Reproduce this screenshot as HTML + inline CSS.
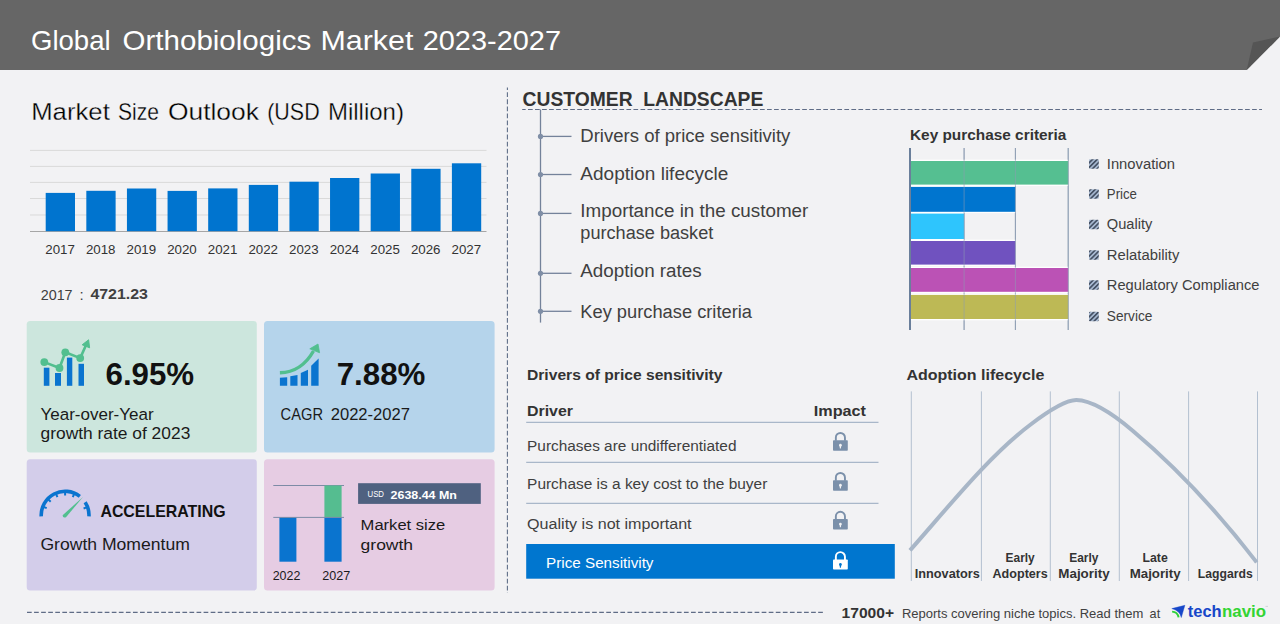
<!DOCTYPE html>
<html><head><meta charset="utf-8"><style>
html,body{margin:0;padding:0;background:#f2f2f4;width:1280px;height:624px;overflow:hidden}
svg{display:block;font-family:"Liberation Sans", sans-serif}
</style></head><body>
<svg width="1280" height="624" viewBox="0 0 1280 624">
<rect width="1280" height="624" fill="#f2f2f4"/>
<rect x="0.00" y="0.00" width="1280.00" height="70.00" fill="#666666" />
<path d="M1246.7,70 L1280,36.6 L1280,70 Z" fill="#f2f2f4" stroke="none" stroke-width="1" />
<path d="M1246.7,70 L1253,42.5 L1280,36.6 Z" fill="#555555" stroke="none" stroke-width="1" />
<text x="31.00" y="49.80" font-size="27.65" font-weight="normal" fill="#ffffff" textLength="79.60" lengthAdjust="spacingAndGlyphs" >Global</text>
<text x="122.60" y="49.80" font-size="27.65" font-weight="normal" fill="#ffffff" textLength="188.60" lengthAdjust="spacingAndGlyphs" >Orthobiologics</text>
<text x="320.50" y="49.80" font-size="27.65" font-weight="normal" fill="#ffffff" textLength="92.90" lengthAdjust="spacingAndGlyphs" >Market</text>
<text x="422.70" y="49.80" font-size="27.65" font-weight="normal" fill="#ffffff" textLength="138.30" lengthAdjust="spacingAndGlyphs" >2023-2027</text>
<text x="31.20" y="119.80" font-size="23.32" font-weight="normal" fill="#000000" textLength="78.60" lengthAdjust="spacingAndGlyphs" stroke="#f2f2f4" stroke-width="0.3">Market</text>
<text x="118.00" y="119.80" font-size="23.32" font-weight="normal" fill="#000000" textLength="41.00" lengthAdjust="spacingAndGlyphs" stroke="#f2f2f4" stroke-width="0.3">Size</text>
<text x="167.90" y="119.80" font-size="23.32" font-weight="normal" fill="#000000" textLength="91.10" lengthAdjust="spacingAndGlyphs" stroke="#f2f2f4" stroke-width="0.3">Outlook</text>
<text x="267.20" y="119.80" font-size="23.32" font-weight="normal" fill="#000000" textLength="52.50" lengthAdjust="spacingAndGlyphs" stroke="#f2f2f4" stroke-width="0.3">(USD</text>
<text x="327.90" y="119.80" font-size="23.32" font-weight="normal" fill="#000000" textLength="76.10" lengthAdjust="spacingAndGlyphs" stroke="#f2f2f4" stroke-width="0.3">Million)</text>
<line x1="30.00" y1="150.40" x2="486.50" y2="150.40" stroke="#d9d9d9" stroke-width="1" />
<line x1="30.00" y1="166.40" x2="486.50" y2="166.40" stroke="#d9d9d9" stroke-width="1" />
<line x1="30.00" y1="182.40" x2="486.50" y2="182.40" stroke="#d9d9d9" stroke-width="1" />
<line x1="30.00" y1="198.50" x2="486.50" y2="198.50" stroke="#d9d9d9" stroke-width="1" />
<line x1="30.00" y1="215.00" x2="486.50" y2="215.00" stroke="#d9d9d9" stroke-width="1" />
<line x1="30.00" y1="231.50" x2="486.50" y2="231.50" stroke="#a6a6a6" stroke-width="1" />
<rect x="45.70" y="192.90" width="29.30" height="38.30" fill="#0074cf" />
<text x="45.30" y="253.75" font-size="13.69" font-weight="normal" fill="#333333" textLength="29.60" lengthAdjust="spacingAndGlyphs" >2017</text>
<rect x="86.32" y="190.80" width="29.30" height="40.40" fill="#0074cf" />
<text x="85.92" y="253.75" font-size="13.69" font-weight="normal" fill="#333333" textLength="29.60" lengthAdjust="spacingAndGlyphs" >2018</text>
<rect x="126.94" y="188.50" width="29.30" height="42.70" fill="#0074cf" />
<text x="126.54" y="253.75" font-size="13.69" font-weight="normal" fill="#333333" textLength="29.60" lengthAdjust="spacingAndGlyphs" >2019</text>
<rect x="167.56" y="190.90" width="29.30" height="40.30" fill="#0074cf" />
<text x="167.16" y="253.75" font-size="13.69" font-weight="normal" fill="#333333" textLength="29.60" lengthAdjust="spacingAndGlyphs" >2020</text>
<rect x="208.18" y="188.40" width="29.30" height="42.80" fill="#0074cf" />
<text x="207.78" y="253.75" font-size="13.69" font-weight="normal" fill="#333333" textLength="29.60" lengthAdjust="spacingAndGlyphs" >2021</text>
<rect x="248.80" y="184.90" width="29.30" height="46.30" fill="#0074cf" />
<text x="248.40" y="253.75" font-size="13.69" font-weight="normal" fill="#333333" textLength="29.60" lengthAdjust="spacingAndGlyphs" >2022</text>
<rect x="289.42" y="181.70" width="29.30" height="49.50" fill="#0074cf" />
<text x="289.02" y="253.75" font-size="13.69" font-weight="normal" fill="#333333" textLength="29.60" lengthAdjust="spacingAndGlyphs" >2023</text>
<rect x="330.04" y="178.00" width="29.30" height="53.20" fill="#0074cf" />
<text x="329.64" y="253.75" font-size="13.69" font-weight="normal" fill="#333333" textLength="29.60" lengthAdjust="spacingAndGlyphs" >2024</text>
<rect x="370.66" y="173.50" width="29.30" height="57.70" fill="#0074cf" />
<text x="370.26" y="253.75" font-size="13.69" font-weight="normal" fill="#333333" textLength="29.60" lengthAdjust="spacingAndGlyphs" >2025</text>
<rect x="411.28" y="168.80" width="29.30" height="62.40" fill="#0074cf" />
<text x="410.88" y="253.75" font-size="13.69" font-weight="normal" fill="#333333" textLength="29.60" lengthAdjust="spacingAndGlyphs" >2026</text>
<rect x="451.90" y="163.30" width="29.30" height="67.90" fill="#0074cf" />
<text x="451.50" y="253.75" font-size="13.69" font-weight="normal" fill="#333333" textLength="29.60" lengthAdjust="spacingAndGlyphs" >2027</text>
<text x="40.70" y="299.80" font-size="15.08" font-weight="normal" fill="#404040" textLength="31.90" lengthAdjust="spacingAndGlyphs" >2017</text>
<text x="79.4" y="299.8" font-size="15" fill="#404040">:</text>
<text x="90.40" y="298.90" font-size="14.66" font-weight="bold" fill="#404040" textLength="57.60" lengthAdjust="spacingAndGlyphs" >4721.23</text>
<rect x="26.70" y="321.00" width="230.10" height="131.40" fill="#cce6dd" rx="3.5" ry="3.5"/>
<rect x="264.00" y="321.00" width="230.60" height="131.40" fill="#b5d4eb" rx="3.5" ry="3.5"/>
<rect x="26.70" y="459.20" width="230.10" height="131.40" fill="#d3cdea" rx="3.5" ry="3.5"/>
<rect x="264.00" y="459.20" width="230.60" height="131.40" fill="#e6cce3" rx="3.5" ry="3.5"/>
<rect x="43.80" y="367.70" width="5.60" height="18.10" fill="#0a74cf" />
<rect x="55.00" y="373.00" width="6.00" height="12.80" fill="#0a74cf" />
<rect x="66.90" y="357.60" width="5.40" height="28.20" fill="#0a74cf" />
<rect x="78.50" y="363.80" width="5.50" height="22.00" fill="#0a74cf" />
<path d="M44.3,362.1 L59.5,368 L65.3,352.3 L80.2,358.1 L86.5,344" fill="none" stroke="#52bf8f" stroke-width="2.6" stroke-linejoin="round"/>
<circle cx="44.3" cy="362.1" r="3.9" fill="#52bf8f"/>
<circle cx="59.5" cy="368" r="3.9" fill="#52bf8f"/>
<circle cx="65.3" cy="352.3" r="3.9" fill="#52bf8f"/>
<circle cx="80.2" cy="358.1" r="3.9" fill="#52bf8f"/>
<path d="M88.6,339.8 L82.2,344.8 L89.6,347.8 Z" fill="#52bf8f" stroke="#52bf8f" stroke-width="1" stroke-linejoin="round"/>
<text x="105.50" y="384.70" font-size="31.70" font-weight="bold" fill="#111111" textLength="88.60" lengthAdjust="spacingAndGlyphs" >6.95%</text>
<text x="40.50" y="419.60" font-size="15.92" font-weight="normal" fill="#1a1a1a" textLength="113.10" lengthAdjust="spacingAndGlyphs" >Year-over-Year</text>
<text x="40.50" y="439.30" font-size="15.92" font-weight="normal" fill="#1a1a1a" textLength="149.80" lengthAdjust="spacingAndGlyphs" >growth rate of 2023</text>
<path d="M279.9,385.8 L279.9,377.8 L287.2,377.3 L287.2,385.8 Z" fill="#0a74cf" stroke="none" stroke-width="1" />
<path d="M290.3,385.8 L290.3,376.3 L297.5,374.9 L297.5,385.8 Z" fill="#0a74cf" stroke="none" stroke-width="1" />
<path d="M300.8,385.8 L300.8,373 L308,369.8 L308,385.8 Z" fill="#0a74cf" stroke="none" stroke-width="1" />
<path d="M311.2,385.8 L311.2,365.8 L318.6,358.6 L318.6,385.8 Z" fill="#0a74cf" stroke="none" stroke-width="1" />
<path d="M279.9,372.8 C293,372.5 305,366 313.5,351" fill="none" stroke="#52bf8f" stroke-width="3.4" />
<path d="M318,344 L309.8,348.8 L319.6,352.8 Z" fill="#52bf8f" stroke="#52bf8f" stroke-width="0.8" stroke-linejoin="round"/>
<text x="336.70" y="384.70" font-size="31.70" font-weight="bold" fill="#111111" textLength="88.70" lengthAdjust="spacingAndGlyphs" >7.88%</text>
<text x="280.60" y="419.80" font-size="16.06" font-weight="normal" fill="#1a1a1a" textLength="42.40" lengthAdjust="spacingAndGlyphs" >CAGR</text>
<text x="330.70" y="419.80" font-size="16.06" font-weight="normal" fill="#1a1a1a" textLength="79.30" lengthAdjust="spacingAndGlyphs" >2022-2027</text>
<path d="M41.23,516.45 A23.9,23.9 0 0 1 79.81,496.37" fill="none" stroke="#0a74cf" stroke-width="3.6" />
<path d="M85.14,502.18 A23.9,23.9 0 0 1 88.97,516.45" fill="none" stroke="#0a74cf" stroke-width="3.6" />
<line x1="43.72" y1="506.99" x2="46.71" y2="508.14" stroke="#0a74cf" stroke-width="2" />
<line x1="48.35" y1="499.58" x2="50.69" y2="501.76" stroke="#0a74cf" stroke-width="2" />
<line x1="56.15" y1="494.12" x2="57.40" y2="497.07" stroke="#0a74cf" stroke-width="2" />
<line x1="65.10" y1="492.30" x2="65.10" y2="495.50" stroke="#0a74cf" stroke-width="2" />
<line x1="74.05" y1="494.12" x2="72.80" y2="497.07" stroke="#0a74cf" stroke-width="2" />
<line x1="86.62" y1="507.37" x2="83.61" y2="508.46" stroke="#0a74cf" stroke-width="2" />
<path d="M62.6,515.2 Q62.8,518.6 66,517.2 L83,497 Z" fill="#52bf8f" stroke="none" stroke-width="1" />
<text x="100.40" y="516.60" font-size="16.06" font-weight="bold" fill="#111111" textLength="125.20" lengthAdjust="spacingAndGlyphs" >ACCELERATING</text>
<text x="40.40" y="549.70" font-size="16.06" font-weight="normal" fill="#1a1a1a" textLength="149.50" lengthAdjust="spacingAndGlyphs" >Growth Momentum</text>
<line x1="273.30" y1="485.50" x2="344.00" y2="485.50" stroke="#7d8ba6" stroke-width="1" />
<rect x="279.40" y="517.40" width="17.00" height="44.30" fill="#0a74cf" />
<rect x="324.40" y="485.50" width="17.20" height="32.00" fill="#55bd90" />
<rect x="324.40" y="517.40" width="17.20" height="44.30" fill="#0a74cf" />
<line x1="273.30" y1="517.40" x2="344.00" y2="517.40" stroke="#7d8ba6" stroke-width="1" />
<text x="272.70" y="579.80" font-size="13.13" font-weight="normal" fill="#1a1a1a" textLength="27.70" lengthAdjust="spacingAndGlyphs" >2022</text>
<text x="322.20" y="579.80" font-size="13.13" font-weight="normal" fill="#1a1a1a" textLength="28.00" lengthAdjust="spacingAndGlyphs" >2027</text>
<rect x="358.10" y="483.20" width="122.70" height="20.70" fill="#4f6180" />
<text x="367.50" y="497.00" font-size="9.50" font-weight="normal" fill="#ffffff" textLength="16.50" lengthAdjust="spacingAndGlyphs" >USD</text>
<text x="390.60" y="499.00" font-size="11.17" font-weight="bold" fill="#ffffff" textLength="66.30" lengthAdjust="spacingAndGlyphs" >2638.44 Mn</text>
<text x="360.60" y="529.90" font-size="15.36" font-weight="normal" fill="#1a1a1a" textLength="84.70" lengthAdjust="spacingAndGlyphs" >Market size</text>
<text x="360.60" y="549.90" font-size="15.36" font-weight="normal" fill="#1a1a1a" textLength="52.50" lengthAdjust="spacingAndGlyphs" >growth</text>
<line x1="507.40" y1="87.40" x2="507.40" y2="593.00" stroke="#5f6e88" stroke-width="1.1" stroke-dasharray="4.8 2.25" stroke-dashoffset="2.15"/>
<line x1="27.00" y1="612.40" x2="823.00" y2="612.40" stroke="#5f6c86" stroke-width="1.1" stroke-dasharray="4.7 2.364"/>
<text x="522.60" y="105.60" font-size="19.97" font-weight="bold" fill="#333333" textLength="240.70" lengthAdjust="spacingAndGlyphs" >CUSTOMER&#160;&#160;LANDSCAPE</text>
<line x1="522.20" y1="109.50" x2="1262.00" y2="109.50" stroke="#5f6c86" stroke-width="1.1" stroke-dasharray="4.7 2.33" stroke-dashoffset="1.23"/>
<line x1="540.50" y1="109.50" x2="540.50" y2="322.60" stroke="#74829a" stroke-width="1.3" />
<line x1="540.50" y1="136.40" x2="571.50" y2="136.40" stroke="#74829a" stroke-width="1.3" />
<circle cx="540.5" cy="136.4" r="2.6" fill="#7f8ea6"/>
<line x1="540.50" y1="174.50" x2="571.50" y2="174.50" stroke="#74829a" stroke-width="1.3" />
<circle cx="540.5" cy="174.5" r="2.6" fill="#7f8ea6"/>
<line x1="540.50" y1="213.40" x2="571.50" y2="213.40" stroke="#74829a" stroke-width="1.3" />
<circle cx="540.5" cy="213.4" r="2.6" fill="#7f8ea6"/>
<line x1="540.50" y1="273.30" x2="571.50" y2="273.30" stroke="#74829a" stroke-width="1.3" />
<circle cx="540.5" cy="273.3" r="2.6" fill="#7f8ea6"/>
<line x1="540.50" y1="311.30" x2="571.50" y2="311.30" stroke="#74829a" stroke-width="1.3" />
<circle cx="540.5" cy="311.3" r="2.6" fill="#7f8ea6"/>
<text x="580.30" y="141.80" font-size="17.60" font-weight="normal" fill="#404040" textLength="210.10" lengthAdjust="spacingAndGlyphs" >Drivers of price sensitivity</text>
<text x="580.30" y="179.70" font-size="17.60" font-weight="normal" fill="#404040" textLength="148.00" lengthAdjust="spacingAndGlyphs" >Adoption lifecycle</text>
<text x="580.30" y="217.30" font-size="17.60" font-weight="normal" fill="#404040" textLength="228.00" lengthAdjust="spacingAndGlyphs" >Importance in the customer</text>
<text x="580.30" y="239.30" font-size="17.60" font-weight="normal" fill="#404040" textLength="133.00" lengthAdjust="spacingAndGlyphs" >purchase basket</text>
<text x="580.30" y="276.70" font-size="17.60" font-weight="normal" fill="#404040" textLength="121.40" lengthAdjust="spacingAndGlyphs" >Adoption rates</text>
<text x="580.30" y="318.20" font-size="17.60" font-weight="normal" fill="#404040" textLength="171.70" lengthAdjust="spacingAndGlyphs" >Key purchase criteria</text>
<text x="910.00" y="139.70" font-size="14.53" font-weight="bold" fill="#333333" textLength="156.40" lengthAdjust="spacingAndGlyphs" >Key purchase criteria</text>
<line x1="964.10" y1="148.00" x2="964.10" y2="330.00" stroke="#8d9db3" stroke-width="1" />
<line x1="1015.40" y1="148.00" x2="1015.40" y2="330.00" stroke="#8d9db3" stroke-width="1" />
<line x1="1068.20" y1="148.00" x2="1068.20" y2="330.00" stroke="#8d9db3" stroke-width="1" />
<rect x="910.50" y="159.70" width="157.70" height="26.20" fill="#ffffff" />
<rect x="910.50" y="185.60" width="104.90" height="27.50" fill="#ffffff" />
<rect x="910.50" y="212.30" width="53.60" height="28.00" fill="#ffffff" />
<rect x="910.50" y="239.70" width="104.90" height="26.20" fill="#ffffff" />
<rect x="910.50" y="266.70" width="157.70" height="26.40" fill="#ffffff" />
<rect x="910.50" y="293.60" width="157.70" height="26.70" fill="#ffffff" />
<rect x="910.50" y="161.00" width="157.70" height="23.60" fill="#55bf91" />
<rect x="910.50" y="186.90" width="104.90" height="24.90" fill="#0075cf" />
<rect x="910.50" y="213.60" width="53.60" height="25.40" fill="#2ec5fd" />
<rect x="910.50" y="241.00" width="104.90" height="23.60" fill="#7052bf" />
<rect x="910.50" y="268.00" width="157.70" height="23.80" fill="#bb52b5" />
<rect x="910.50" y="294.90" width="157.70" height="24.10" fill="#bdb955" />
<line x1="964.10" y1="148.00" x2="964.10" y2="330.00" stroke="#8d9db3" stroke-width="1" opacity="0.55"/>
<line x1="1015.40" y1="148.00" x2="1015.40" y2="330.00" stroke="#8d9db3" stroke-width="1" opacity="0.55"/>
<line x1="1068.20" y1="148.00" x2="1068.20" y2="330.00" stroke="#8d9db3" stroke-width="1" opacity="0.55"/>
<line x1="910.00" y1="148.00" x2="910.00" y2="330.00" stroke="#6a7f9b" stroke-width="2" />
<defs><pattern id="hatch" patternUnits="userSpaceOnUse" width="3.3" height="3.3" patternTransform="rotate(45)"><rect width="3.3" height="3.3" fill="#a9bbd3"/><rect width="1.7" height="3.3" fill="#465265"/></pattern></defs>
<rect x="1089.00" y="159.15" width="9.80" height="9.60" fill="url(#hatch)" rx="1"/>
<text x="1106.80" y="168.75" font-size="14.66" font-weight="normal" fill="#404040" textLength="68.20" lengthAdjust="spacingAndGlyphs" >Innovation</text>
<rect x="1089.00" y="189.20" width="9.80" height="9.60" fill="url(#hatch)" rx="1"/>
<text x="1106.80" y="198.80" font-size="14.66" font-weight="normal" fill="#404040" textLength="30.20" lengthAdjust="spacingAndGlyphs" >Price</text>
<rect x="1089.00" y="219.70" width="9.80" height="9.60" fill="url(#hatch)" rx="1"/>
<text x="1106.80" y="229.30" font-size="14.66" font-weight="normal" fill="#404040" textLength="45.60" lengthAdjust="spacingAndGlyphs" >Quality</text>
<rect x="1089.00" y="250.20" width="9.80" height="9.60" fill="url(#hatch)" rx="1"/>
<text x="1106.80" y="259.80" font-size="14.66" font-weight="normal" fill="#404040" textLength="72.60" lengthAdjust="spacingAndGlyphs" >Relatability</text>
<rect x="1089.00" y="280.20" width="9.80" height="9.60" fill="url(#hatch)" rx="1"/>
<text x="1106.80" y="289.80" font-size="14.66" font-weight="normal" fill="#404040" textLength="152.70" lengthAdjust="spacingAndGlyphs" >Regulatory Compliance</text>
<rect x="1089.00" y="311.70" width="9.80" height="9.60" fill="url(#hatch)" rx="1"/>
<text x="1106.80" y="321.30" font-size="14.66" font-weight="normal" fill="#404040" textLength="45.60" lengthAdjust="spacingAndGlyphs" >Service</text>
<text x="527.00" y="379.60" font-size="14.53" font-weight="bold" fill="#333333" textLength="195.40" lengthAdjust="spacingAndGlyphs" >Drivers of price sensitivity</text>
<text x="527.00" y="415.80" font-size="14.94" font-weight="bold" fill="#333333" textLength="46.00" lengthAdjust="spacingAndGlyphs" >Driver</text>
<text x="813.80" y="415.80" font-size="14.94" font-weight="bold" fill="#333333" textLength="52.20" lengthAdjust="spacingAndGlyphs" >Impact</text>
<line x1="526.20" y1="422.30" x2="878.50" y2="422.30" stroke="#a9b7c9" stroke-width="1.2" />
<line x1="526.20" y1="462.30" x2="878.50" y2="462.30" stroke="#a9b7c9" stroke-width="1.2" />
<line x1="526.20" y1="503.30" x2="878.50" y2="503.30" stroke="#a9b7c9" stroke-width="1.2" />
<text x="527.10" y="451.00" font-size="15.50" font-weight="normal" fill="#404040" textLength="209.40" lengthAdjust="spacingAndGlyphs" >Purchases are undifferentiated</text>
<text x="527.10" y="489.00" font-size="15.50" font-weight="normal" fill="#404040" textLength="240.20" lengthAdjust="spacingAndGlyphs" >Purchase is a key cost to the buyer</text>
<text x="527.10" y="529.10" font-size="15.50" font-weight="normal" fill="#404040" textLength="164.50" lengthAdjust="spacingAndGlyphs" >Quality is not important</text>
<rect x="526.20" y="544.00" width="368.60" height="34.70" fill="#0076cf" />
<text x="546.10" y="567.90" font-size="14.94" font-weight="normal" fill="#ffffff" textLength="107.40" lengthAdjust="spacingAndGlyphs" >Price Sensitivity</text>
<path d="M835.85,440.80 L835.85,437.50 A4.55,4.55 0 0 1 844.95,437.50 L844.95,440.80" fill="none" stroke="#7b90aa" stroke-width="1.9" />
<rect x="833.00" y="440.30" width="14.80" height="10.40" fill="#7b90aa" rx="0.8"/>
<circle cx="840.40" cy="445.20" r="1.35" fill="#f2f2f4"/>
<path d="M839.50,445.30 L841.30,445.30 L840.90,448.50 L839.90,448.50 Z" fill="#f2f2f4" stroke="none" stroke-width="1" />
<path d="M835.85,480.80 L835.85,477.50 A4.55,4.55 0 0 1 844.95,477.50 L844.95,480.80" fill="none" stroke="#7b90aa" stroke-width="1.9" />
<rect x="833.00" y="480.30" width="14.80" height="10.40" fill="#7b90aa" rx="0.8"/>
<circle cx="840.40" cy="485.20" r="1.35" fill="#f2f2f4"/>
<path d="M839.50,485.30 L841.30,485.30 L840.90,488.50 L839.90,488.50 Z" fill="#f2f2f4" stroke="none" stroke-width="1" />
<path d="M835.85,519.60 L835.85,516.30 A4.55,4.55 0 0 1 844.95,516.30 L844.95,519.60" fill="none" stroke="#7b90aa" stroke-width="1.9" />
<rect x="833.00" y="519.10" width="14.80" height="10.40" fill="#7b90aa" rx="0.8"/>
<circle cx="840.40" cy="524.00" r="1.35" fill="#f2f2f4"/>
<path d="M839.50,524.10 L841.30,524.10 L840.90,527.30 L839.90,527.30 Z" fill="#f2f2f4" stroke="none" stroke-width="1" />
<path d="M835.85,560.00 L835.85,556.70 A4.55,4.55 0 0 1 844.95,556.70 L844.95,560.00" fill="none" stroke="#ffffff" stroke-width="1.9" />
<rect x="833.00" y="559.50" width="14.80" height="10.00" fill="#ffffff" rx="0.8"/>
<circle cx="840.40" cy="564.40" r="1.35" fill="#0076cf"/>
<path d="M839.50,564.50 L841.30,564.50 L840.90,567.70 L839.90,567.70 Z" fill="#0076cf" stroke="none" stroke-width="1" />
<text x="906.40" y="379.90" font-size="15.22" font-weight="bold" fill="#333333" textLength="137.90" lengthAdjust="spacingAndGlyphs" >Adoption lifecycle</text>
<line x1="911.30" y1="391.40" x2="911.30" y2="581.00" stroke="#b3c0d0" stroke-width="1" />
<line x1="981.40" y1="391.40" x2="981.40" y2="581.00" stroke="#b3c0d0" stroke-width="1" />
<line x1="1050.30" y1="391.40" x2="1050.30" y2="581.00" stroke="#b3c0d0" stroke-width="1" />
<line x1="1119.30" y1="391.40" x2="1119.30" y2="581.00" stroke="#b3c0d0" stroke-width="1" />
<line x1="1188.60" y1="391.40" x2="1188.60" y2="581.00" stroke="#b3c0d0" stroke-width="1" />
<line x1="1257.50" y1="391.40" x2="1257.50" y2="581.00" stroke="#b3c0d0" stroke-width="1" />
<path d="M910,550.4 C950,505 990,455 1030,425 C1055,406 1068,400 1076.4,400.1 C1092,400.5 1113,414 1133,431 C1177,468 1221,516 1256.7,562.4" fill="none" stroke="#a8b6c7" stroke-width="4.0" stroke-linecap="butt"/>
<text x="914.75" y="577.50" font-size="12.57" font-weight="bold" fill="#333333" textLength="65.00" lengthAdjust="spacingAndGlyphs" >Innovators</text>
<text x="1005.60" y="561.90" font-size="12.57" font-weight="bold" fill="#333333" textLength="29.15" lengthAdjust="spacingAndGlyphs" >Early</text>
<text x="992.50" y="577.50" font-size="12.57" font-weight="bold" fill="#333333" textLength="55.25" lengthAdjust="spacingAndGlyphs" >Adopters</text>
<text x="1069.20" y="561.90" font-size="12.57" font-weight="bold" fill="#333333" textLength="29.20" lengthAdjust="spacingAndGlyphs" >Early</text>
<text x="1058.30" y="577.50" font-size="12.57" font-weight="bold" fill="#333333" textLength="51.30" lengthAdjust="spacingAndGlyphs" >Majority</text>
<text x="1142.50" y="561.90" font-size="12.57" font-weight="bold" fill="#333333" textLength="25.30" lengthAdjust="spacingAndGlyphs" >Late</text>
<text x="1129.70" y="577.50" font-size="12.57" font-weight="bold" fill="#333333" textLength="50.90" lengthAdjust="spacingAndGlyphs" >Majority</text>
<text x="1197.80" y="577.50" font-size="12.57" font-weight="bold" fill="#333333" textLength="54.90" lengthAdjust="spacingAndGlyphs" >Laggards</text>
<text x="841.60" y="617.80" font-size="15.22" font-weight="bold" fill="#333333" textLength="52.50" lengthAdjust="spacingAndGlyphs" >17000+</text>
<text x="901.90" y="617.70" font-size="12.15" font-weight="normal" fill="#404040" textLength="241.40" lengthAdjust="spacingAndGlyphs" >Reports covering niche topics. Read them</text>
<text x="1149.60" y="617.70" font-size="12.15" font-weight="normal" fill="#404040" textLength="10.60" lengthAdjust="spacingAndGlyphs" >at</text>
<path d="M1171.8,608.6 L1184.9,605.3 L1181.3,617.6 Q1180.2,610.9 1171.8,608.6 Z" fill="#1747c9" stroke="#1747c9" stroke-width="0.4" stroke-linejoin="round"/>
<path d="M1172.1,611.6 Q1177.6,611.8 1178.6,617.4" fill="none" stroke="#2fd03a" stroke-width="1.9" />
<text x="1187.80" y="617.25" font-size="16.20" font-weight="bold" fill="#1747c9" textLength="33.80" lengthAdjust="spacingAndGlyphs" >tech</text>
<text x="1222.00" y="617.25" font-size="16.20" font-weight="bold" fill="#33d433" textLength="44.00" lengthAdjust="spacingAndGlyphs" >navio</text>
<line x1="1265.50" y1="606.40" x2="1268.00" y2="606.40" stroke="#b8c0c8" stroke-width="0.6" />
</svg>
</body></html>
